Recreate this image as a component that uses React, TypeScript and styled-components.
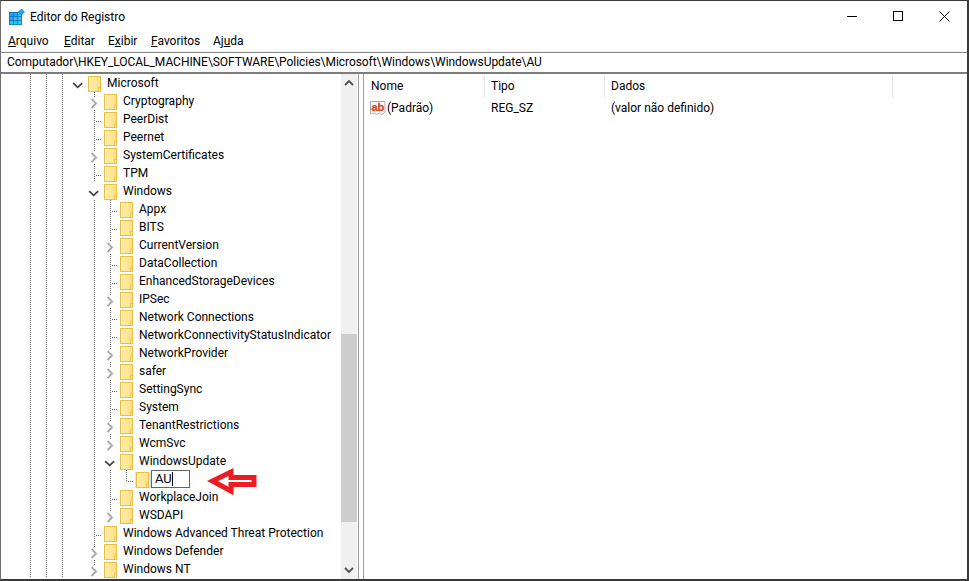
import React from "react";
import styled, { createGlobalStyle } from "styled-components";

const Global = createGlobalStyle`
  html, body { margin: 0; padding: 0; background: #fff; overflow: hidden; }
  body { font-family: "Roboto", "Open Sans", "Liberation Sans", sans-serif; font-size: 12px; color: #000; }
`;

const Window = styled.div`
  width: 969px; height: 581px; box-sizing: border-box;
  display: flex; flex-direction: column;
  border-top: 1px solid #3a3a3a; border-left: 1px solid #6e6e6e;
  border-right: 2px solid #3a3a3a; border-bottom: 2px solid #3a3a3a;
  background: #fff; overflow: hidden; position: relative;
`;
const TitleBar = styled.div`
  height: 31px; flex: none; display: flex; align-items: center; padding-left: 8px;
`;
const TitleText = styled.span`
  margin-left: 5px; line-height: 30px; flex: 1;
`;
const WinButton = styled.div`
  width: 46px; height: 30px; align-self: flex-start; display: flex; align-items: center; justify-content: center;
`;
const MenuBar = styled.div`
  height: 19px; flex: none; display: flex; align-items: center; position: relative;
  border-bottom: 1px solid #f0f0f0;
`;
const MenuItem = styled.span<{ $w: number }>`
  width: ${p => p.$w}px; flex: none; line-height: 19px; padding-left: 7px; box-sizing: border-box;
`;
const AddressBar = styled.div`
  height: 22px; flex: none; box-sizing: border-box;
  border-top: 1px solid #8a8a8a; border-bottom: 2px solid #7c7c7c;
  padding-left: 6px; line-height: 19px; white-space: nowrap; overflow: hidden; letter-spacing: -0.05px;
`;
const Panes = styled.div`
  flex: 1; min-height: 0; display: flex;
`;
const TreePane = styled.div`
  width: 340px; flex: none; overflow: hidden; padding-left: 22px; box-sizing: border-box;
`;
const TreeRow = styled.div`
  height: 18px; display: flex; align-items: stretch; white-space: nowrap;
`;
const IndentCell = styled.div<{ $line?: boolean }>`
  width: 16px; flex: none; position: relative;
  ${p => p.$line ? `background: linear-gradient(#666 50%, transparent 50%) 7px 0 / 1px 2px repeat-y;` : ""}
`;
const TeeCell = styled.div<{ $last?: boolean }>`
  width: 16px; flex: none; position: relative;
  background: linear-gradient(#666 50%, transparent 50%) 7px 0 / 1px 2px ${p => p.$last ? "no-repeat" : "repeat-y"};
  ${p => p.$last ? `background-size: 1px 12px; background-image: repeating-linear-gradient(#666 0 1px, transparent 1px 2px);` : ""}
  &::after {
    content: ""; position: absolute; left: 8px; top: 11px; width: 7px; height: 1px;
    background: repeating-linear-gradient(90deg, transparent 0 1px, #666 1px 2px);
  }
`;
const ChevronCell = styled.div<{ $line?: boolean }>`
  width: 16px; flex: none; position: relative;
  ${p => p.$line ? `background: linear-gradient(#666 50%, transparent 50%) 7px 0 / 1px 2px repeat-y;` : ""}
  svg { position: absolute; left: 0; top: 0; }
`;
const FolderBox = styled.div<{ $selected?: boolean }>`
  width: 16px; flex: none; position: relative; box-sizing: border-box;
  ${p => p.$selected ? "background: #cce8ff content-box; padding-top: 2px;" : ""}
  svg { display: block; position: absolute; left: 1px; top: 2px; }
`;
const Label = styled.span`
  padding-left: 4px; line-height: 18px;
`;
const EditBox = styled.span`
  align-self: flex-start; width: 39px; height: 18px; box-sizing: border-box; flex: none;
  border: 1px solid #646464; background: #fff; padding-left: 3px; line-height: 16px; position: relative; z-index: 1;
  display: flex; align-items: center; font-size: 13px;
`;
const Caret = styled.span`
  display: inline-block; width: 1px; height: 14px; background: #000;
`;
const ScrollBar = styled.div`
  width: 16px; flex: none; background: #f0f0f0; display: flex; flex-direction: column;
`;
const ScrollButton = styled.div`
  height: 17px; flex: none; display: flex; align-items: center; justify-content: center;
`;
const ScrollGap = styled.div<{ $h?: number }>`
  ${p => p.$h ? `height: ${p.$h}px; flex: none;` : "flex: 1;"}
`;
const ScrollThumb = styled.div`
  height: 188px; flex: none; background: #cdcdcd;
`;
const Splitter = styled.div`
  width: 6px; flex: none; margin-left: 1px; box-sizing: border-box;
  border-left: 1px solid #9c9c9c; border-right: 1px solid #9c9c9c;
`;
const ListPane = styled.div`
  flex: 1; min-width: 0; padding-left: 1px;
`;
const ListRow = styled.div`
  display: grid; grid-template-columns: 120px 120px 288px 1fr;
`;
const HeadRow = styled(ListRow)`
  height: 25px; line-height: 25px;
`;
const HeadCell = styled.div`
  padding-left: 6px; position: relative; height: 24px;
  &:not(:last-child)::after {
    content: ""; position: absolute; right: 0; top: 1px; width: 1px; height: 23px; background: #e5e5e5;
  }
`;
const DataRow = styled(ListRow)`
  height: 18px; line-height: 18px;
`;
const DataCell = styled.div`
  padding-left: 6px; display: flex; align-items: center;
`;
const ValueIcon = styled.svg`
  margin-right: 1px; flex: none; margin-left: -1px;
`;
const Callout = styled.svg`
  position: absolute; left: 204px; top: 462px;
`;

const Folder = () => (
  <svg width="14" height="16" viewBox="0 0 14 16">
    <defs>
      <linearGradient id="fg" x1="0" y1="0" x2="1" y2="0">
        <stop offset="0" stopColor="#ffeeac" />
        <stop offset="1" stopColor="#fde085" />
      </linearGradient>
    </defs>
    <rect x="0.5" y="0.5" width="12" height="15" fill="url(#fg)" stroke="#e9c044" />
    <path d="M10.5 15.5v-4h2" fill="none" stroke="#e9c044" />
    <rect x="11" y="12" width="1" height="3" fill="#fff6d0" />
  </svg>
);
const ChevronRight = () => (
  <svg width="16" height="18" viewBox="0 0 16 18">
    <rect x="3" y="6" width="8" height="11" fill="#fff" />
    <path d="M4.6 7 9 11.5 4.6 16" fill="none" stroke="#a8a8a8" strokeWidth="1.8" />
  </svg>
);
const ChevronDown = () => (
  <svg width="16" height="18" viewBox="0 0 16 18">
    <path d="M2.2 9.2 6.7 13.4 11.2 9.2" fill="none" stroke="#404040" strokeWidth="1.7" />
  </svg>
);

type Kind = "open" | "closed" | "tee";
type Item = { name: string; level: number; kind: Kind; editing?: boolean; last?: boolean };
const items: Item[] = [
  { name: "Microsoft", level: 3, kind: "open" },
  { name: "Cryptography", level: 4, kind: "closed" },
  { name: "PeerDist", level: 4, kind: "tee" },
  { name: "Peernet", level: 4, kind: "tee" },
  { name: "SystemCertificates", level: 4, kind: "closed" },
  { name: "TPM", level: 4, kind: "tee" },
  { name: "Windows", level: 4, kind: "open" },
  { name: "Appx", level: 5, kind: "tee" },
  { name: "BITS", level: 5, kind: "tee" },
  { name: "CurrentVersion", level: 5, kind: "closed" },
  { name: "DataCollection", level: 5, kind: "tee" },
  { name: "EnhancedStorageDevices", level: 5, kind: "tee" },
  { name: "IPSec", level: 5, kind: "closed" },
  { name: "Network Connections", level: 5, kind: "tee" },
  { name: "NetworkConnectivityStatusIndicator", level: 5, kind: "tee" },
  { name: "NetworkProvider", level: 5, kind: "closed" },
  { name: "safer", level: 5, kind: "closed" },
  { name: "SettingSync", level: 5, kind: "tee" },
  { name: "System", level: 5, kind: "tee" },
  { name: "TenantRestrictions", level: 5, kind: "closed" },
  { name: "WcmSvc", level: 5, kind: "closed" },
  { name: "WindowsUpdate", level: 5, kind: "open" },
  { name: "AU", level: 6, kind: "tee", editing: true, last: true },
  { name: "WorkplaceJoin", level: 5, kind: "tee" },
  { name: "WSDAPI", level: 5, kind: "closed" },
  { name: "Windows Advanced Threat Protection", level: 4, kind: "tee" },
  { name: "Windows Defender", level: 4, kind: "closed" },
  { name: "Windows NT", level: 4, kind: "closed" },
];

const menus: { w: number; a: string; u: string; b: string }[] = [
  { w: 56, a: "", u: "A", b: "rquivo" },
  { w: 44, a: "", u: "E", b: "ditar" },
  { w: 43, a: "E", u: "x", b: "ibir" },
  { w: 62, a: "", u: "F", b: "avoritos" },
  { w: 60, a: "Aj", u: "u", b: "da" },
];

export default function App() {
  return (
    <Window>
      <Global />
      <TitleBar>
        <svg width="16" height="16" viewBox="0 0 16 16" style={{ flex: "none" }}>
          <rect x="0" y="3" width="13" height="13" fill="#0a6fb5" />
          {[0, 1, 2].flatMap(r => [0, 1, 2].map(c => (
            <rect key={`${r}${c}`} x={0.8 + c * 4.1} y={3.8 + r * 4.1} width="3.4" height="3.4"
              fill={r + c < 2 ? "#2aa6ea" : "#36c0f5"} />
          )))}
          <path d="M12.5 0 15.5 3 12.5 6 9.5 3Z" fill="#2aa6ea" stroke="#0a6fb5" strokeWidth="0.7" />
        </svg>
        <TitleText>Editor do Registro</TitleText>
        <WinButton>
          <svg width="10" height="10" viewBox="0 0 10 10"><path d="M0 5.5h10" stroke="#000" /></svg>
        </WinButton>
        <WinButton>
          <svg width="10" height="10" viewBox="0 0 10 10"><rect x=".5" y=".5" width="9" height="9" fill="none" stroke="#000" /></svg>
        </WinButton>
        <WinButton>
          <svg width="11" height="11" viewBox="0 0 11 11"><path d="M.5.5l10 10M10.5.5l-10 10" stroke="#000" /></svg>
        </WinButton>
      </TitleBar>
      <MenuBar>
        {menus.map(m => (
          <MenuItem key={m.u + m.b} $w={m.w}>{m.a}<u>{m.u}</u>{m.b}</MenuItem>
        ))}
      </MenuBar>
      <AddressBar>Computador\HKEY_LOCAL_MACHINE\SOFTWARE\Policies\Microsoft\Windows\WindowsUpdate\AU</AddressBar>
      <Panes>
        <TreePane>
          {items.map(it => (
            <TreeRow key={it.name}>
              {Array.from({ length: it.level }, (_, i) => <IndentCell key={i} $line={i !== 3} />)}
              {it.kind === "tee" && <TeeCell $last={it.last} />}
              {it.kind === "closed" && <ChevronCell $line><ChevronRight /></ChevronCell>}
              {it.kind === "open" && <ChevronCell><ChevronDown /></ChevronCell>}
              <FolderBox $selected={it.editing}><Folder /></FolderBox>
              {it.editing
                ? <EditBox>{it.name}<Caret /></EditBox>
                : <Label>{it.name}</Label>}
            </TreeRow>
          ))}
        </TreePane>
        <ScrollBar>
          <ScrollButton>
            <svg width="10" height="7" viewBox="0 0 10 7"><path d="M1 6 5 2l4 4" fill="none" stroke="#505050" strokeWidth="1.8" /></svg>
          </ScrollButton>
          <ScrollGap $h={243} />
          <ScrollThumb />
          <ScrollGap />
          <ScrollButton>
            <svg width="10" height="7" viewBox="0 0 10 7"><path d="M1 1l4 4 4-4" fill="none" stroke="#505050" strokeWidth="1.8" /></svg>
          </ScrollButton>
        </ScrollBar>
        <Splitter />
        <ListPane>
          <HeadRow>
            <HeadCell>Nome</HeadCell>
            <HeadCell>Tipo</HeadCell>
            <HeadCell>Dados</HeadCell>
            <div />
          </HeadRow>
          <DataRow>
            <DataCell>
              <ValueIcon width="16" height="16" viewBox="0 0 16 16">
                <path d="M.5 1.5h14.5v11l-3 2-2.5-1.5-3 1.5-3-1.5-3 1Z" fill="#fff" stroke="#a8a8a8" />
                <text x="1.5" y="11" fontFamily="Liberation Sans, sans-serif" fontSize="11" fontWeight="700" fill="#d8431c" stroke="#d8431c" strokeWidth="0.3">ab</text>
              </ValueIcon>
              (Padrão)
            </DataCell>
            <DataCell>REG_SZ</DataCell>
            <DataCell>(valor não definido)</DataCell>
          </DataRow>
        </ListPane>
      </Panes>
      <Callout width="54" height="34" viewBox="0 0 54 34">
        <path d="M7.5 18 26 9V14.5H49V21.5H26V28Z" fill="#fff" stroke="#ed1c24" strokeWidth="5" />
      </Callout>
    </Window>
  );
}
